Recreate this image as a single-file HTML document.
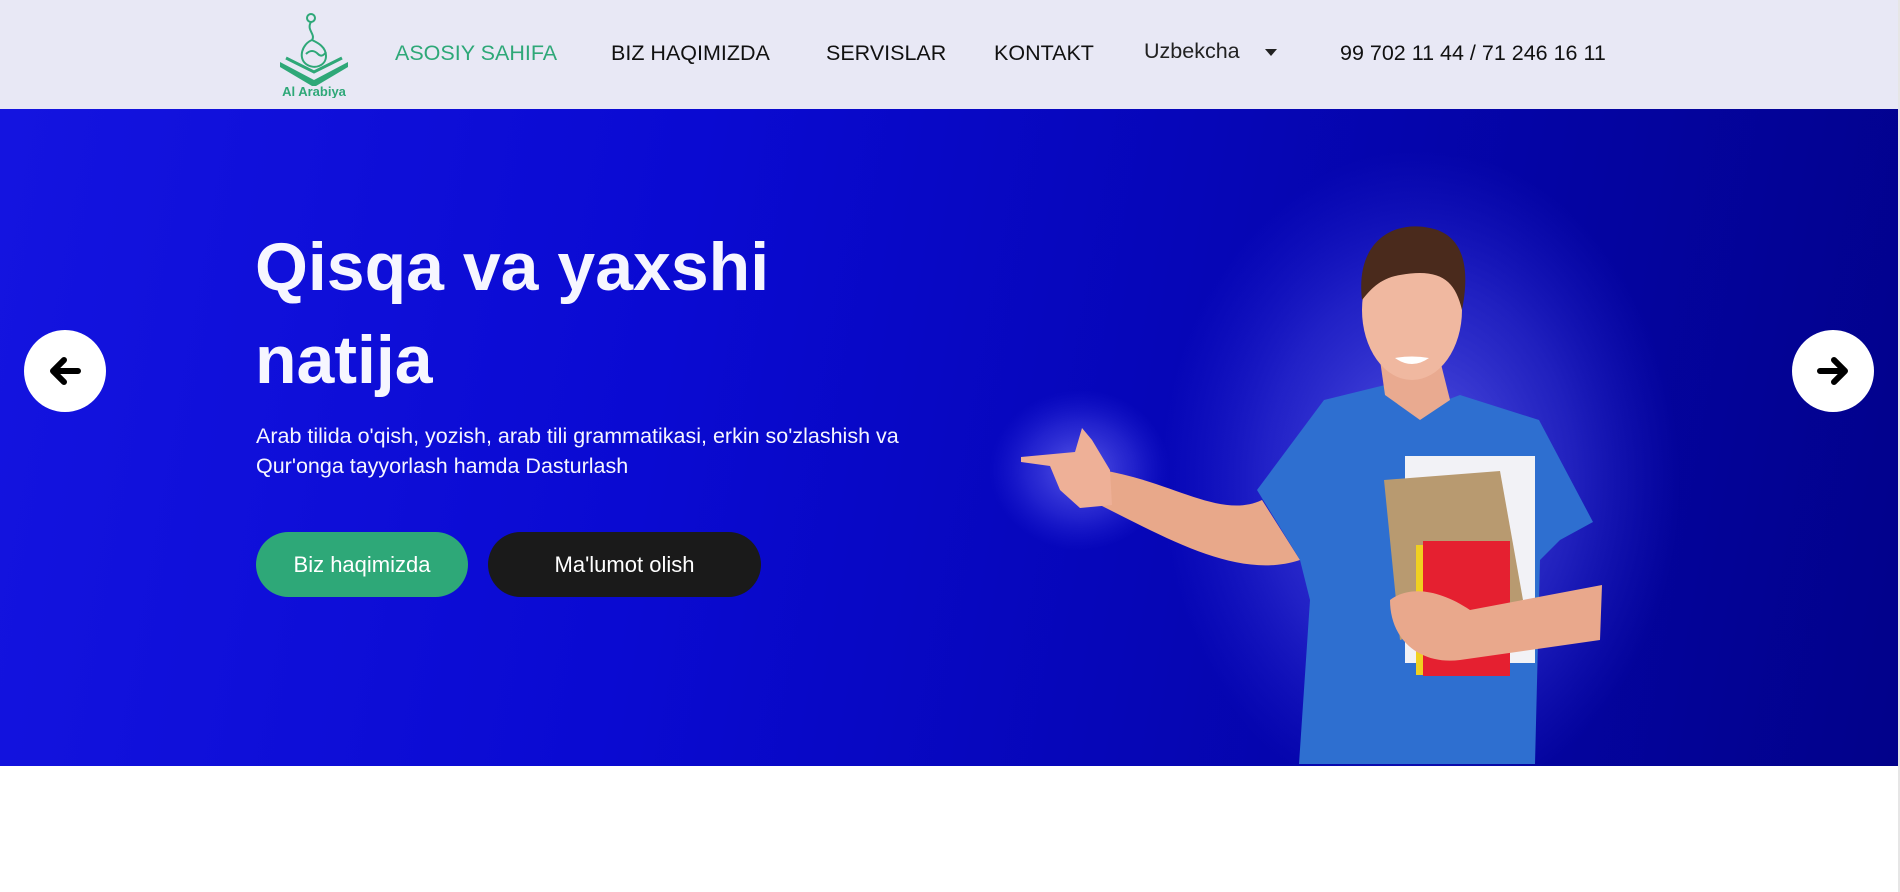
<!DOCTYPE html>
<html><head><meta charset="utf-8"><style>
*{margin:0;padding:0;box-sizing:border-box}
body{width:1900px;height:892px;overflow:hidden;background:#fff;font-family:"Liberation Sans",sans-serif;position:relative}
.hdr{position:absolute;left:0;top:0;width:1900px;height:109px;background:#e8e8f5}
.nav{position:absolute;top:40px;font-size:21.5px;color:#111;white-space:nowrap;line-height:26px}
.hero{position:absolute;left:0;top:109px;width:1898px;height:657px;overflow:hidden;
background:linear-gradient(100deg,#1414e0 0%,#0a0ad2 35%,#0606b8 60%,#02028a 100%)}
.t{position:absolute;color:#f6f6ff;white-space:nowrap}
.btn{position:absolute;top:532px;height:65px;border-radius:33px;color:#fff;font-size:22px;text-align:center;line-height:65px}
.circ{position:absolute;top:330px;width:82px;height:82px;border-radius:50%;background:#fff}
.sb{position:absolute;right:0;top:0;width:2px;height:892px;background:#e6e6e6}
</style></head><body>
<div class="hdr"></div>
<svg style="position:absolute;left:276px;top:10px" width="76" height="88" viewBox="0 0 76 88">
 <g fill="none" stroke="#2ea878" stroke-width="2">
  <circle cx="35" cy="8" r="4"/>
  <path d="M35 12 C30 20 40 24 36 30 C26 34 22 48 30 54 C38 60 50 56 50 46 C50 36 40 32 36 30"/>
  <path d="M30 44 q6 -6 12 0 q4 4 8 -2"/>
 </g>
 <path d="M4 52 L38 70 L72 52 L72 57 L40 76 L36 76 L4 57 Z" fill="#2ea878"/>
 <path d="M10 48 L38 62 L66 48" fill="none" stroke="#2ea878" stroke-width="3"/>
 <text x="38" y="86" font-family="Liberation Sans" font-weight="bold" font-size="13" fill="#2ea878" text-anchor="middle">Al Arabiya</text>
</svg>
<div class="nav" style="left:395px;color:#2ea878">ASOSIY SAHIFA</div>
<div class="nav" style="left:611px">BIZ HAQIMIZDA</div>
<div class="nav" style="left:826px">SERVISLAR</div>
<div class="nav" style="left:994px">KONTAKT</div>
<div class="nav" style="left:1144px;top:38px;color:#222">Uzbekcha</div>
<div style="position:absolute;left:1265px;top:49px;width:0;height:0;border-left:6px solid transparent;border-right:6px solid transparent;border-top:7px solid #222"></div>
<div class="nav" style="left:1340px">99 702 11 44 / 71 246 16 11</div>

<div class="hero">
 <svg style="position:absolute;left:0;top:0" width="1898" height="657" viewBox="0 109 1898 657">
  <defs>
   <radialGradient id="g" cx="0.5" cy="0.5" r="0.5">
    <stop offset="0" stop-color="#7070f4" stop-opacity="0.8"/>
    <stop offset="0.6" stop-color="#4a4ae8" stop-opacity="0.4"/>
    <stop offset="1" stop-color="#3030e0" stop-opacity="0"/>
   </radialGradient>
  </defs>
  <ellipse cx="1420" cy="480" rx="260" ry="330" fill="url(#g)"/>
  <ellipse cx="1080" cy="470" rx="90" ry="80" fill="url(#g)"/>
  <path d="M1100 470 C1170 480 1220 520 1262 500 L1300 560 C1240 580 1170 540 1100 505 Z" fill="#e8a88a"/>
  <path d="M1021 457 L1075 452 L1082 428 L1092 440 L1110 470 L1112 505 L1080 508 L1060 490 L1050 466 L1021 462 Z" fill="#eeb097"/>
  <path d="M1324 400 L1385 385 L1420 410 L1460 395 L1539 420 L1593 522 L1560 540 L1540 560 L1535 764 L1299 764 L1310 600 L1300 560 L1257 490 Z" fill="#2e6fd0"/>
  <path d="M1380 360 L1440 360 L1450 400 L1420 420 L1385 395 Z" fill="#e9aa90"/>
  <ellipse cx="1412" cy="310" rx="50" ry="70" fill="#f0b8a0"/>
  <path d="M1362 300 C1355 240 1395 220 1430 228 C1465 235 1470 270 1462 310 C1455 280 1440 268 1400 275 C1380 278 1370 290 1362 300 Z" fill="#4a2a1c"/>
  <path d="M1395 358 q17 12 34 0 q-17 -3 -34 0" fill="#fff"/>
  <rect x="1405" y="456" width="130" height="207" fill="#f2f2f6"/>
  <path d="M1384 480 L1500 471 L1523 600 L1400 640 Z" fill="#b89a70"/>
  <rect x="1416" y="545" width="80" height="130" fill="#f0d020"/>
  <rect x="1423" y="541" width="87" height="135" fill="#e52030"/>
  <path d="M1390 600 C1410 585 1440 590 1470 610 L1602 585 L1600 640 L1460 660 C1420 665 1390 640 1390 600 Z" fill="#e9a88c"/>
 </svg>
 <div class="t" style="left:255px;top:112px;font-size:68px;font-weight:bold;line-height:93px">Qisqa va yaxshi<br>natija</div>
 <div class="t" style="left:256px;top:312px;font-size:21.5px;line-height:30px">Arab tilida o'qish, yozish, arab tili grammatikasi, erkin so'zlashish va<br>Qur'onga tayyorlash hamda Dasturlash</div>
 <div class="btn" style="left:256px;top:423px;width:212px;background:#2ea878">Biz haqimizda</div>
 <div class="btn" style="left:488px;top:423px;width:273px;background:#1a1a1a">Ma'lumot olish</div>
 <div class="circ" style="left:24px;top:221px"><svg width="82" height="82" viewBox="0 0 82 82"><path d="M54 41 H30 M40 30 L29 41 L40 52" fill="none" stroke="#000" stroke-width="6" stroke-linecap="round" stroke-linejoin="round"/></svg></div>
 <div class="circ" style="left:1792px;top:221px"><svg width="82" height="82" viewBox="0 0 82 82"><path d="M28 41 H52 M42 30 L53 41 L42 52" fill="none" stroke="#000" stroke-width="6" stroke-linecap="round" stroke-linejoin="round"/></svg></div>
</div>
<div class="sb"></div>
</body></html>
